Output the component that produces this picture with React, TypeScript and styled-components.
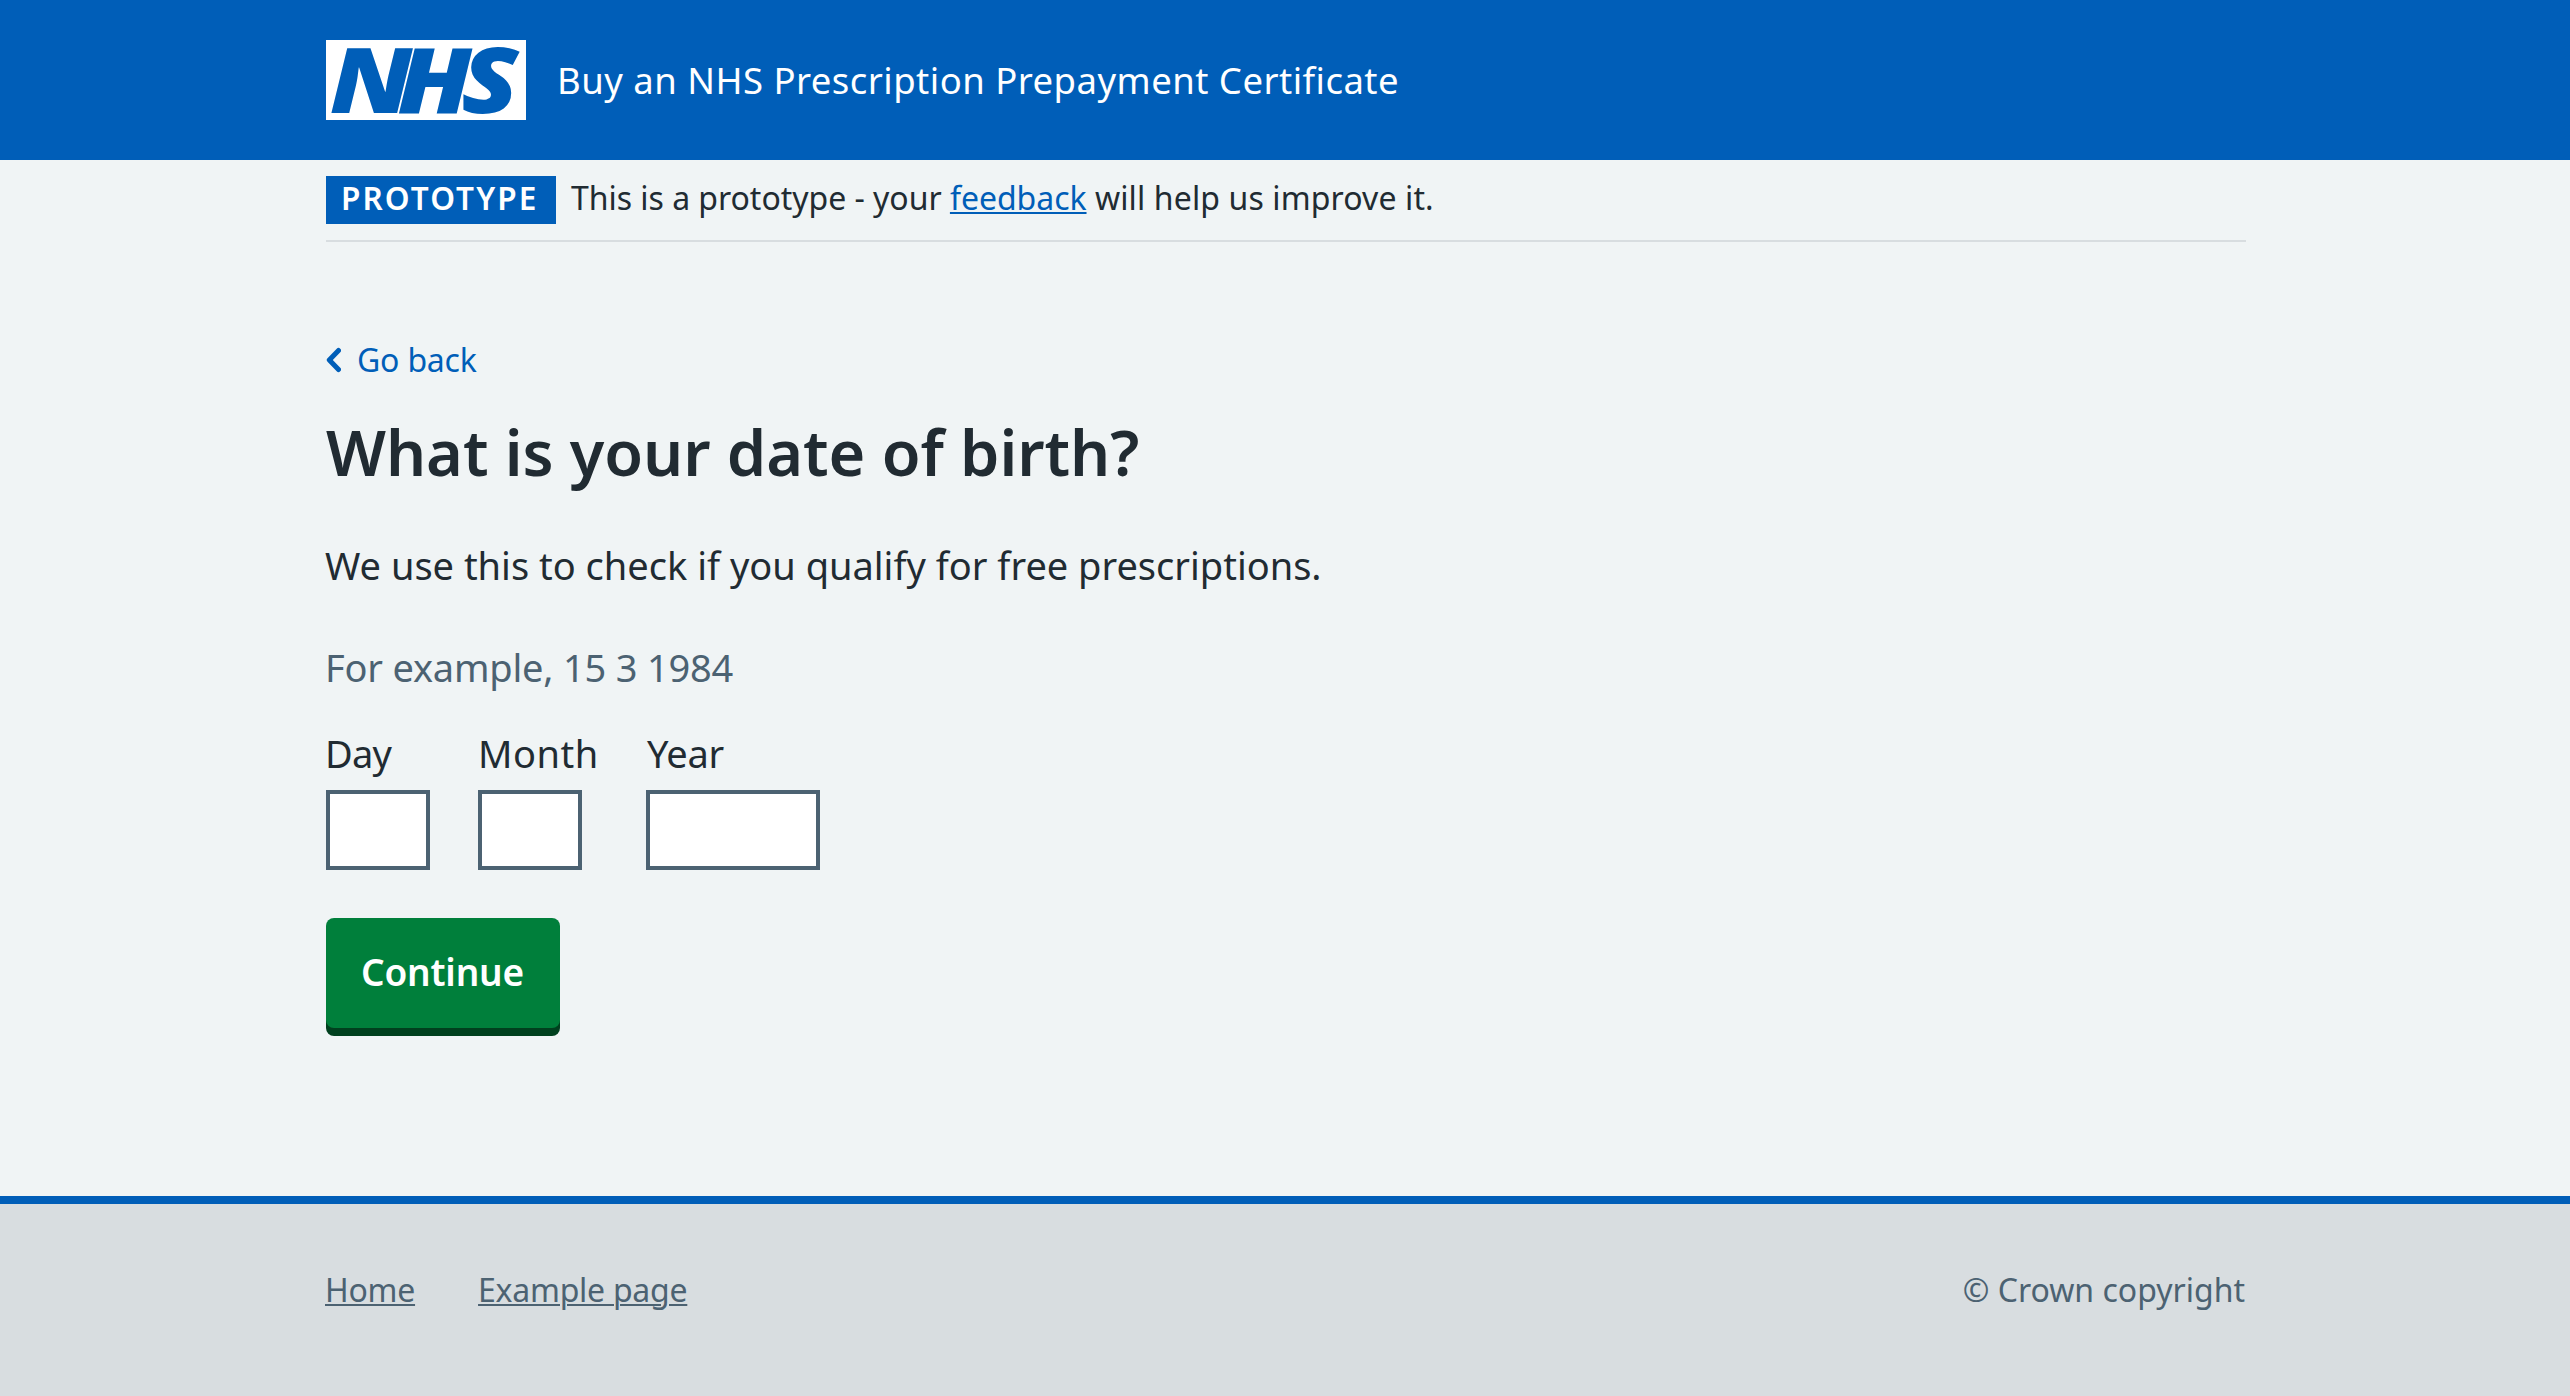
import React from "react";
import styled, { createGlobalStyle } from "styled-components";

const color = {
  blue: "#005eb8",
  page: "#f0f4f5",
  text: "#212b32",
  muted: "#4c6272",
  footer: "#d8dde0",
  green: "#007f3b",
  greenDark: "#00401e",
  white: "#ffffff",
};

const GlobalStyle = createGlobalStyle`
  * { box-sizing: border-box; }
  body {
    margin: 0;
    background: ${color.page};
    color: ${color.text};
    font-family: "Noto Sans", "Open Sans", sans-serif;
    font-size: 38px;
    line-height: 56px;
  }
`;

const Page = styled.div`
  display: flex;
  flex-direction: column;
  min-height: 1396px;
`;

const Container = styled.div`
  width: 1920px;
  margin: 0 0 0 326px;
`;

const Header = styled.header`
  background: ${color.blue};
  color: ${color.white};
`;

const HeaderRow = styled(Container)`
  display: flex;
  align-items: center;
  gap: 31px;
  height: 160px;
`;

const Logo = styled.svg`
  display: block;
  width: 200px;
  height: 80px;
  overflow: visible;
  background: ${color.white};
`;

const LogoText = styled.text`
  fill: ${color.blue};
  font: italic 900 91px "Noto Sans", sans-serif;
`;

const ServiceName = styled.span`
  font-size: 36.5px;
  line-height: 48px;
  letter-spacing: 0.47px;
`;

const PhaseBanner = styled(Container)`
  display: flex;
  gap: 15px;
  padding: 16px 0;
  border-bottom: 2px solid ${color.footer};
`;

const Tag = styled.strong`
  width: 230px;
  height: 48px;
  padding: 0 0 4px 15px;
  background: ${color.blue};
  color: ${color.white};
  font-size: 31.5px;
  font-weight: 600;
  line-height: 44px;
  letter-spacing: 2.1px;
`;

const BannerText = styled.span`
  font-size: 32px;
  line-height: 44px;
  letter-spacing: -0.03px;
`;

const BannerEnd = styled.span`
  letter-spacing: 0.12px;
`;

const Link = styled.a<{ $tone?: string }>`
  color: ${(p) => p.$tone ?? color.blue};
  text-decoration: underline;
  text-decoration-thickness: 2px;
  text-underline-offset: 2px;
`;

const Main = styled(Container)`
  display: flex;
  flex: 1;
  flex-direction: column;
  align-items: flex-start;
  padding-top: 94px;
`;

const BackLink = styled.a`
  display: flex;
  align-items: center;
  gap: 16px;
  color: ${color.blue};
  font-size: 32px;
  line-height: 48px;
  letter-spacing: -0.2px;
  text-decoration: none;
`;

const Chevron = styled.svg`
  width: 15px;
  height: 26px;
  fill: none;
  stroke: ${color.blue};
  stroke-width: 5;
  stroke-linecap: round;
  stroke-linejoin: round;
`;

const Heading = styled.h1`
  margin: 32px 0 0;
  font-size: 63px;
  font-weight: 600;
  line-height: 72px;
  letter-spacing: -0.06px;
`;

const Lead = styled.p`
  margin: 49px 0 0 -1px;
`;

const Hint = styled.p`
  margin: 46px 0 0 -1px;
  color: ${color.muted};
  letter-spacing: -0.2px;
`;

const DateFields = styled.div`
  display: flex;
  margin-top: 30px;
`;

const Field = styled.label<{ $width: number }>`
  display: flex;
  flex-direction: column;
  gap: 9px;
  width: ${(p) => p.$width}px;
`;

const FieldName = styled.span<{ $spacing: number; $shift: number }>`
  margin-left: ${(p) => p.$shift}px;
  letter-spacing: ${(p) => p.$spacing}px;
`;

const Input = styled.input<{ $width: number }>`
  width: ${(p) => p.$width}px;
  height: 80px;
  margin: 0;
  padding: 8px;
  border: 4px solid ${color.muted};
  border-radius: 0;
  background: ${color.white};
  color: ${color.text};
  font: inherit;
`;

const Button = styled.button`
  width: 234px;
  height: 110px;
  margin: 48px 0 0;
  padding: 0 1px 3px 0;
  border: 0;
  border-radius: 8px;
  background: ${color.green};
  box-shadow: 0 8px 0 ${color.greenDark};
  color: ${color.white};
  font: 600 37px/56px "Noto Sans", sans-serif;
  letter-spacing: -0.17px;
`;

const Footer = styled.footer`
  height: 200px;
  padding-top: 62px;
  border-top: 8px solid ${color.blue};
  background: ${color.footer};
  color: ${color.muted};
  font-size: 32px;
  line-height: 48px;
`;

const FooterRow = styled(Container)`
  display: flex;
  justify-content: space-between;
  margin-left: 325px;
`;

const FooterLinks = styled.nav`
  display: flex;
  gap: 63px;
  letter-spacing: -0.25px;
`;

const fields = [
  { name: "Day", column: 152, input: 104, spacing: -0.8, shift: -1 },
  { name: "Month", column: 168, input: 104, spacing: 0.5, shift: 0 },
  { name: "Year", column: 174, input: 174, spacing: -0.3, shift: 1 },
];

export default function App() {
  return (
    <Page>
      <GlobalStyle />
      <Header>
        <HeaderRow>
          <Logo viewBox="0 0 200 80" role="img" aria-label="NHS">
            <LogoText x="3.2 61.9 117.7" y="72.5" transform="scale(1.15 1)">NHS</LogoText>
          </Logo>
          <ServiceName>Buy an NHS Prescription Prepayment Certificate</ServiceName>
        </HeaderRow>
      </Header>
      <PhaseBanner>
        <Tag>PROTOTYPE</Tag>
        <BannerText>
          This is a prototype - your <Link href="#">feedback</Link>
          <BannerEnd> will help us improve it.</BannerEnd>
        </BannerText>
      </PhaseBanner>
      <Main as="main">
        <BackLink href="#">
          <Chevron viewBox="0 0 15 26">
            <path d="M12.5 3.5 3.3 13 12.5 22.5" />
          </Chevron>
          Go back
        </BackLink>
        <Heading>What is your date of birth?</Heading>
        <Lead>We use this to check if you qualify for free prescriptions.</Lead>
        <Hint>For example, 15 3 1984</Hint>
        <DateFields>
          {fields.map((f) => (
            <Field key={f.name} $width={f.column}>
              <FieldName $spacing={f.spacing} $shift={f.shift}>{f.name}</FieldName>
              <Input $width={f.input} inputMode="numeric" />
            </Field>
          ))}
        </DateFields>
        <Button>Continue</Button>
      </Main>
      <Footer>
        <FooterRow>
          <FooterLinks>
            <Link href="#" $tone={color.muted}>Home</Link>
            <Link href="#" $tone={color.muted}>Example page</Link>
          </FooterLinks>
          <span>© Crown copyright</span>
        </FooterRow>
      </Footer>
    </Page>
  );
}
